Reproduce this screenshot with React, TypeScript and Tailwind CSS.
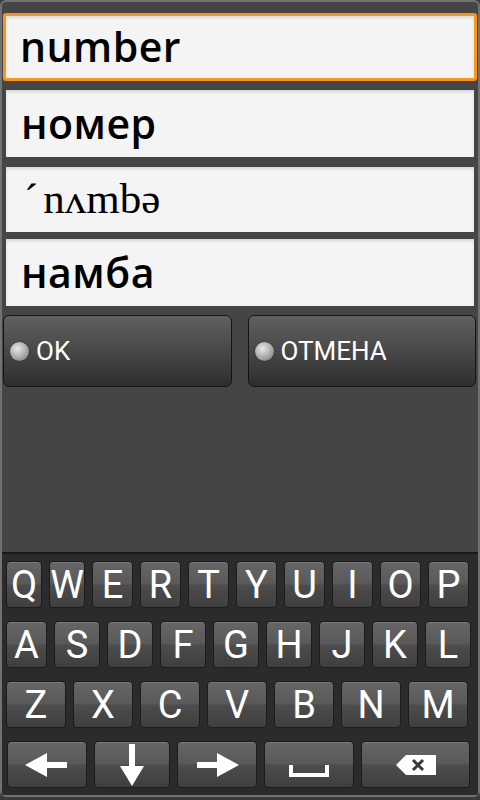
import React from "react";

const keyCls =
  "flex items-center justify-center h-[47px] rounded-[4px] border border-[#1c1c1c] bg-[linear-gradient(to_bottom,#666666,#595959_48%,#4c4c4c_52%,#3f3f3f)] text-white font-['Roboto'] text-[38px] leading-none shadow-[inset_0_1px_0_rgba(255,255,255,0.12)]";

const Key = ({ w, children }: { w: number; children: React.ReactNode }) => (
  <div className={keyCls} style={{ width: w }}>
    {children}
  </div>
);

const sansCls = "font-['Open_Sans'] font-semibold text-[41px] tracking-[0.5px]";

const Field = ({ children, serif }: { children: React.ReactNode; serif?: boolean }) => (
  <div
    className={
      "flex items-center bg-[#f4f4f4] pl-[15px] text-black shadow-[inset_0_2px_3px_rgba(0,0,0,0.12)] " +
      (serif ? "font-['Liberation_Serif'] text-[43px]" : sansCls)
    }
  >
    {children}
  </div>
);

const Radio = () => (
  <span className="w-[19px] h-[19px] rounded-full bg-[radial-gradient(circle_at_40%_35%,#e8e8e8,#a8a8a8_55%,#6a6a6a)] shadow-[0_0_1px_#000]" />
);

export default function App() {
  const row1 = [
    ["Q", 36], ["W", 36], ["E", 41], ["R", 41], ["T", 41],
    ["Y", 41], ["U", 41], ["I", 41], ["O", 41], ["P", 41],
  ] as const;
  const row2 = [
    ["A", 41], ["S", 46], ["D", 46], ["F", 46], ["G", 46],
    ["H", 46], ["J", 46], ["K", 46], ["L", 46],
  ] as const;
  const row3 = ["Z", "X", "C", "V", "B", "N", "M"];

  return (
    <div className="w-[480px] h-[800px] bg-[#363b40] overflow-hidden">
      <div className="h-[797px] flex flex-col border-2 border-[#727272] rounded-[6px] bg-[#454545]">
        {/* focused field */}
        <div className="mt-[11px] ml-px mr-px h-[68px] border-[3px] border-[#f7951d] rounded-[3px] bg-[#f4f4f4] flex">
          <div className={"flex-1 flex items-center pl-[14px] text-black shadow-[inset_0_2px_3px_rgba(0,0,0,0.1)] " + sansCls}>
            number
          </div>
        </div>
        <div className="mx-[4px] mt-[9px] h-[67px] flex flex-col [&>div]:flex-1">
          <Field>номер</Field>
        </div>
        <div className="mx-[4px] mt-[10px] h-[62px] flex flex-col [&>div]:flex-1">
          <Field serif>
            <span className="pl-[3px]">ˊ</span>
            <span className="pl-[5px]">nʌmbə</span>
          </Field>
        </div>
        <div className="mx-[4px] mt-[10px] h-[67px] flex flex-col [&>div]:flex-1">
          <Field>намба</Field>
        </div>

        <div className="mt-[9px] ml-px mr-[2px] h-[72px] flex gap-[16px]">
          {["OK", "ОТМЕНА"].map((t) => (
            <div
              key={t}
              className="flex-1 flex items-center gap-[7px] pl-[6px] rounded-[6px] border border-[#141414] bg-[linear-gradient(to_bottom,#606060,#4a4a4a_45%,#2e2e2e)] text-white font-['Roboto'] text-[26px]"
            >
              <Radio />
              <span>{t}</span>
            </div>
          ))}
        </div>

        <div className="flex-1" />

        {/* keyboard */}
        <div className="h-[243px] bg-[#2b2b2b] border-t-2 border-[#1a1a1a] pt-[7px] pl-[4px] flex flex-col gap-[13px]">
          <div className="flex gap-[7px]">
            {row1.map(([k, w]) => (
              <Key key={k} w={w}>{k}</Key>
            ))}
          </div>
          <div className="flex gap-[7px]">
            {row2.map(([k, w]) => (
              <Key key={k} w={w}>{k}</Key>
            ))}
          </div>
          <div className="flex gap-[7px]">
            {row3.map((k) => (
              <Key key={k} w={60}>{k}</Key>
            ))}
          </div>
          <div className="flex gap-[7px] pl-px">
            <Key w={80}>
              <svg width="44" height="26" viewBox="0 0 44 26">
                <polygon points="0,13 22,1 22,10 42,10 42,16 22,16 22,25" fill="#fff" />
              </svg>
            </Key>
            <Key w={76}>
              <svg width="26" height="42" viewBox="0 0 26 42">
                <polygon points="13,42 1,22 10,22 10,0 16,0 16,22 25,22" fill="#fff" />
              </svg>
            </Key>
            <Key w={80}>
              <svg width="44" height="26" viewBox="0 0 44 26">
                <polygon points="44,13 22,1 22,10 2,10 2,16 22,16 22,25" fill="#fff" />
              </svg>
            </Key>
            <Key w={90}>
              <svg width="42" height="14" viewBox="0 0 42 14" className="mt-[14px]">
                <path d="M1,0 V12 H41 V0 H37 V8 H5 V0 Z" fill="#fff" />
              </svg>
            </Key>
            <Key w={109}>
              <svg width="40" height="20" viewBox="0 0 40 20">
                <polygon points="0,10 10,0 40,0 40,20 10,20" fill="#fff" />
                <path d="M17,5 L27,15 M27,5 L17,15" stroke="#3a3a3a" strokeWidth="3" />
              </svg>
            </Key>
          </div>
        </div>
      </div>
    </div>
  );
}
